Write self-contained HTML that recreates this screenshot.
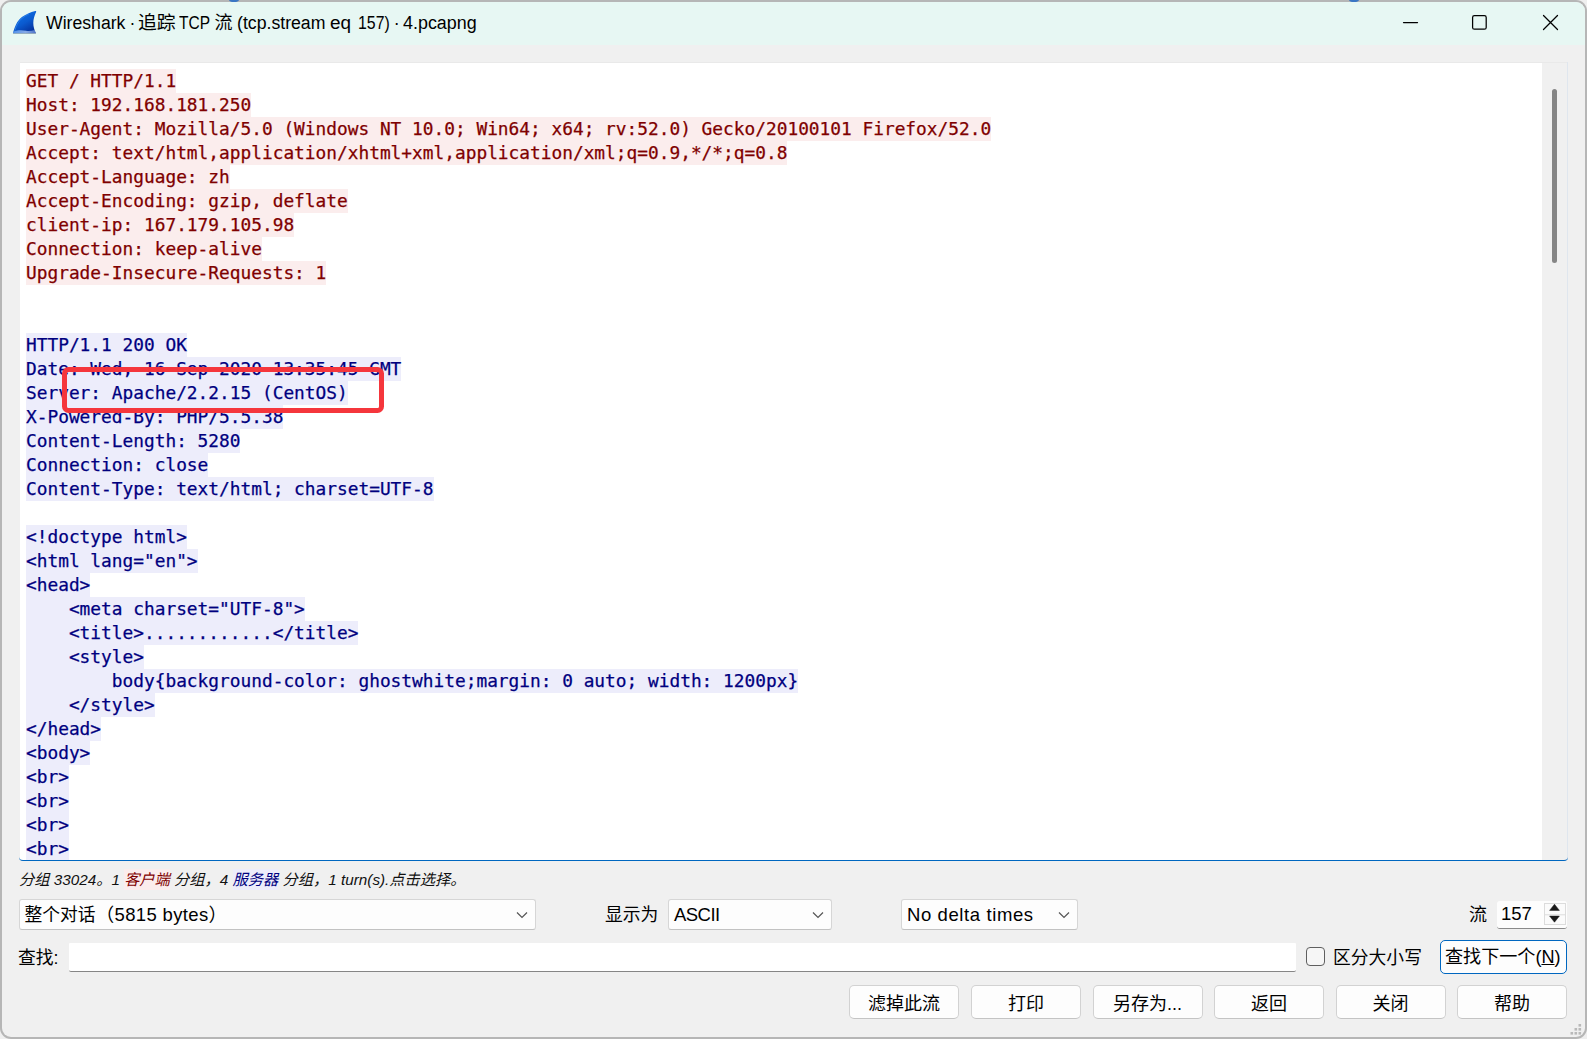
<!DOCTYPE html>
<html lang="zh-CN">
<head>
<meta charset="utf-8">
<title>Wireshark · 追踪 TCP 流 (tcp.stream eq 157) · 4.pcapng</title>
<style>
*{box-sizing:border-box;margin:0;padding:0}
html,body{width:1587px;height:1039px;overflow:hidden;background:#efefef}
body{position:relative;font-family:"Liberation Sans","Noto Sans CJK SC",sans-serif;color:#000}
.abs{position:absolute}
#frame{position:absolute;left:0;top:0;width:1587px;height:1039px;background:#b6b6b6;border-radius:11px}
#win{position:absolute;left:2px;top:1.8px;width:1583px;height:1035.2px;background:#f0f0f0;border-radius:9px;overflow:hidden}
#titlebar{position:absolute;left:0;top:0;width:1583px;height:43.2px;background:#e7f7f3}
#title{position:absolute;left:46.5px;top:11px;font-size:17.6px;line-height:24px;white-space:pre;color:#000}
#textarea{position:absolute;left:20px;top:63px;width:1522px;height:797px;background:#fff;overflow:hidden}
#sbtrack{position:absolute;left:1542px;top:63px;width:25px;height:797px;background:#f0f0f0}
#sbline{position:absolute;left:1567px;top:62px;width:1px;height:798px;background:#dfe6ee}
#thumb{position:absolute;left:1552px;top:89px;width:5px;height:174px;border-radius:2.5px;background:#858585}
#focusline{position:absolute;left:19px;top:853px;width:1549px;height:8px;border-bottom:1.5px solid #0067c0;border-radius:0 0 4px 4px}
#code{position:absolute;left:6px;top:6px;font-family:"DejaVu Sans Mono","Liberation Mono",monospace;font-size:17.82px;line-height:24px;white-space:pre;-webkit-text-stroke:0.25px currentColor}
#code div{height:24px}
#code span{display:inline-block;height:24px;line-height:23px;vertical-align:top}
.c{color:#7f0000}.c span{background:#fbeded}
.s{color:#00007f}.s span{background:#ededfb}

.ui{font-size:17.6px;line-height:24px;white-space:pre}
#status{position:absolute;left:19px;top:868px;font-size:15.25px;line-height:24px;font-style:italic;white-space:pre;color:#111}
#status .cl{color:#7f0000;background:#fbeded;padding:2px 0 1.5px}
#status .sv{color:#00007f;background:#ededfb;padding:2px 0 1.5px}
.combo{position:absolute;top:899px;height:31px;background:#fdfdfd;border:1px solid #d6d6d6;border-bottom-color:#c2c2c2;border-radius:3px;font-size:18.5px;line-height:29px;padding-left:5px;white-space:pre}
.combo svg{position:absolute;right:7px;top:11px}
.btn{position:absolute;top:985px;width:110px;height:33.5px;background:#fdfdfd;border:1px solid #d2d2d2;border-bottom-color:#c4c4c4;border-radius:5px;font-size:18px;line-height:36.4px;text-align:center;white-space:pre}
#find{position:absolute;left:69px;top:943px;width:1227px;height:28.6px;background:#fff;border-bottom:1.5px solid #868686;border-radius:1px 1px 2px 2px}
#cb{position:absolute;left:1306px;top:947px;width:19px;height:19px;border:1.3px solid #5f5f5f;border-radius:4px;background:#f6f6f6}
#next{position:absolute;left:1440px;top:940px;width:127px;height:34px;background:#fdfdfd;border:1.6px solid #0067c0;border-radius:5px;font-size:18.1px;text-indent:-1.5px;line-height:32.5px;text-align:center;white-space:pre}
#spin{position:absolute;left:1497px;top:901px;width:70px;height:28px;background:#fdfdfd;border-bottom:1.3px solid #8a8a8a;border-radius:3px;font-size:18.5px;line-height:25px;padding-left:4px}
#spinbtn{position:absolute;left:1544px;top:903px;width:21.5px;height:22px;border:1px solid #dcdcdc;background:#fbfbfb}
#title span{position:absolute;top:0;transform-origin:0 0;white-space:pre}
#title .cj{font-size:18px}
</style>
</head>
<body>
<div id="frame"></div>
<div id="win">
<div id="titlebar"></div>
</div>
<div id="title"><span style="left:-0.7px;transform:scaleX(1.003)">Wireshark </span><span style="left:82.9px;transform:scaleX(1.000)">· </span><span class="cj" style="left:91.3px;transform:scaleX(1.046)">追踪 </span><span style="left:132.7px;transform:scaleX(0.880)">TCP </span><span class="cj" style="left:168.0px;transform:scaleX(1.000)">流 </span><span style="left:190.8px;transform:scaleX(1.005)">(tcp.stream </span><span style="left:283.6px;transform:scaleX(1.075)">eq </span><span style="left:311.3px;transform:scaleX(0.901)">157) </span><span style="left:347.3px;transform:scaleX(1.000)">· </span><span style="left:356.5px;transform:scaleX(1.018)">4.pcapng</span></div>
<div id="textarea">
<div id="code"><div class="c"><span>GET / HTTP/1.1</span></div><div class="c"><span>Host: 192.168.181.250</span></div><div class="c"><span>User-Agent: Mozilla/5.0 (Windows NT 10.0; Win64; x64; rv:52.0) Gecko/20100101 Firefox/52.0</span></div><div class="c"><span>Accept: text/html,application/xhtml+xml,application/xml;q=0.9,*/*;q=0.8</span></div><div class="c"><span>Accept-Language: zh</span></div><div class="c"><span>Accept-Encoding: gzip, deflate</span></div><div class="c"><span>client-ip: 167.179.105.98</span></div><div class="c"><span>Connection: keep-alive</span></div><div class="c"><span>Upgrade-Insecure-Requests: 1</span></div><div></div><div></div><div class="s"><span>HTTP/1.1 200 OK</span></div><div class="s"><span>Date: Wed, 16 Sep 2020 13:35:45 GMT</span></div><div class="s"><span>Server: Apache/2.2.15 (CentOS)</span></div><div class="s"><span>X-Powered-By: PHP/5.5.38</span></div><div class="s"><span>Content-Length: 5280</span></div><div class="s"><span>Connection: close</span></div><div class="s"><span>Content-Type: text/html; charset=UTF-8</span></div><div></div><div class="s"><span>&lt;!doctype html&gt;</span></div><div class="s"><span>&lt;html lang="en"&gt;</span></div><div class="s"><span>&lt;head&gt;</span></div><div class="s"><span>    &lt;meta charset="UTF-8"&gt;</span></div><div class="s"><span>    &lt;title&gt;............&lt;/title&gt;</span></div><div class="s"><span>    &lt;style&gt;</span></div><div class="s"><span>        body{background-color: ghostwhite;margin: 0 auto; width: 1200px}</span></div><div class="s"><span>    &lt;/style&gt;</span></div><div class="s"><span>&lt;/head&gt;</span></div><div class="s"><span>&lt;body&gt;</span></div><div class="s"><span>&lt;br&gt;</span></div><div class="s"><span>&lt;br&gt;</span></div><div class="s"><span>&lt;br&gt;</span></div><div class="s"><span>&lt;br&gt;</span></div></div>
</div>
<div class="abs" style="left:20px;top:62px;width:1547px;height:1px;background:#e9e9e9"></div>
<div id="sbtrack"></div>
<div id="sbline"></div>
<div id="thumb"></div>
<div id="focusline"></div>

<div id="status"><span>分组 33024。1 </span><span class="cl">客户端</span><span> 分组，4 </span><span class="sv">服务器</span><span> 分组，1 turn(s).点击选择。</span></div>
<div class="combo" style="left:19px;width:517px"><span style="font-size:17.8px;margin-left:-0.5px">整个对话</span><span style="letter-spacing:0.36px">（5815 bytes）</span><svg width="12" height="8" viewBox="0 0 12 8"><path d="M1 1.5 L6 6.5 L11 1.5" fill="none" stroke="#555" stroke-width="1.2"/></svg></div>
<div class="abs ui" style="left:605px;top:903px;font-size:17.8px">显示为</div>
<div class="combo" style="left:668px;width:164px"><span style="letter-spacing:-0.55px">ASCII</span><svg width="12" height="8" viewBox="0 0 12 8"><path d="M1 1.5 L6 6.5 L11 1.5" fill="none" stroke="#555" stroke-width="1.2"/></svg></div>
<div class="combo" style="left:901px;width:177px"><span style="letter-spacing:0.6px">No delta times</span><svg width="12" height="8" viewBox="0 0 12 8"><path d="M1 1.5 L6 6.5 L11 1.5" fill="none" stroke="#555" stroke-width="1.2"/></svg></div>
<div class="abs ui" style="left:1469px;top:903px;font-size:18px">流</div>
<div id="spin">157</div>
<div id="spinbtn"><svg class="abs" style="left:-1px;top:-1px" width="22" height="22" viewBox="0 0 22 22"><path d="M0 11.8 H22" stroke="#dcdcdc" stroke-width="1"/><path d="M5.6 7.4 L10.5 1.2 L15.4 7.4 Z M5.6 13.1 L15.4 13.1 L10.5 19.2 Z" fill="#1a1a1a" stroke="#1a1a1a" stroke-width="0.5" stroke-linejoin="round"/></svg></div>
<div class="abs ui" style="left:18px;top:945.5px;font-size:17.8px">查找:</div>
<div id="find"></div>
<div id="cb"></div>
<div class="abs ui" style="left:1333px;top:945.5px;font-size:17.8px">区分大小写</div>
<div id="next">查找下一个(<u>N</u>)</div>
<div class="btn" style="left:849px">滤掉此流</div>
<div class="btn" style="left:971px">打印</div>
<div class="btn" style="left:1092.5px">另存为...</div>
<div class="btn" style="left:1214px">返回</div>
<div class="btn" style="left:1335.5px">关闭</div>
<div class="btn" style="left:1457px">帮助</div>
<svg class="abs" style="left:1570px;top:1023px" width="13" height="13" viewBox="0 0 13 13"><g fill="#b9b9b9"><rect x="8.5" y="1" width="2.6" height="2.6"/><rect x="4.5" y="5" width="2.6" height="2.6"/><rect x="8.5" y="5" width="2.6" height="2.6"/><rect x="0.5" y="9" width="2.6" height="2.6"/><rect x="4.5" y="9" width="2.6" height="2.6"/><rect x="8.5" y="9" width="2.6" height="2.6"/></g></svg>

<div class="abs" style="left:62px;top:367px;width:321.5px;height:46px;border:5px solid #f5363c;border-radius:6.5px"></div>
<svg class="abs" style="left:12px;top:9px" width="26" height="26" viewBox="0 0 26 26">
<defs><linearGradient id="fin" x1="0.25" y1="0" x2="0.85" y2="1"><stop offset="0" stop-color="#0f74ea"/><stop offset="0.5" stop-color="#0a5acf"/><stop offset="1" stop-color="#052a92"/></linearGradient>
<linearGradient id="wat" x1="0" y1="0" x2="1" y2="0"><stop offset="0" stop-color="#5f9df0"/><stop offset="0.55" stop-color="#9dbcf0"/><stop offset="1" stop-color="#5b7fd0"/></linearGradient></defs>
<path d="M1.1 24.3 C2.3 18.5 5.2 11.5 9.9 8.1 C13.5 5.2 18.5 2.9 23.3 1.9 C24.1 1.8 24.4 2.2 24.1 2.9 C22.6 6.2 21.3 10 21.3 13.9 C21.3 17.5 22.4 21 23.9 24.3 Z" fill="url(#fin)"/>
<path d="M2.6 22.5 C3.8 17.5 6.3 12.2 10.4 8.9 C12.4 7.3 14.6 6 17 4.9" fill="none" stroke="#4f9af2" stroke-width="0.9" opacity="0.55"/>
<path d="M1.6 22.4 C5.5 20.9 10 21 14 21.7 C17 22.2 20 21.8 22.7 20.9 L23.9 24.3 L1.1 24.3 Z" fill="url(#wat)" opacity="0.85"/>
<path d="M1 24.4 H24" stroke="#7f9396" stroke-width="0.6" opacity="0.8"/>
</svg>
<svg class="abs" style="left:1395px;top:10px" width="180" height="26" viewBox="0 0 180 26" fill="none" stroke="#000" stroke-width="1.25" stroke-linecap="round">
<path d="M8.5 12.5 H22.5"/>
<rect x="77.6" y="5.6" width="13.6" height="13.6" rx="1.8"/>
<path d="M148.5 5.5 L162.5 19.5 M162.5 5.5 L148.5 19.5"/>
</svg>
<div class="abs" style="left:228.5px;top:-3px;width:10px;height:5px;border-radius:50%;background:#3a76c4"></div>
<div class="abs" style="left:1348.5px;top:-3px;width:10px;height:5px;border-radius:50%;background:#3a76c4"></div>
<!--EXTRA-->
</body>
</html>
